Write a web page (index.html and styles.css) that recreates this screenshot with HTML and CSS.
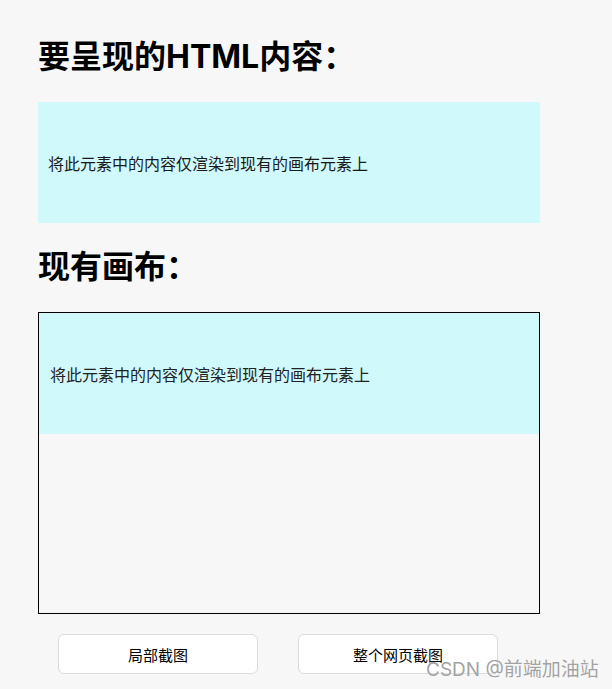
FILE: index.html
```html
<!DOCTYPE html>
<html lang="zh">
<head>
<meta charset="utf-8">
<link rel="stylesheet" href="styles.css">
</head>
<body>
<main class="page">
  <h1 class="title">要呈现的HTML内容：</h1>
  <div class="source">将此元素中的内容仅渲染到现有的画布元素上</div>
  <h2 class="title second">现有画布：</h2>
  <div class="canvas">
    <div class="canvas-shot">将此元素中的内容仅渲染到现有的画布元素上</div>
  </div>
  <div class="actions">
    <button class="btn">局部截图</button>
    <button class="btn">整个网页截图</button>
  </div>
</main>
<div class="watermark">CSDN @前端加油站</div>
</body>
</html>
```
FILE: styles.css
```css
html, body {
  margin: 0;
  padding: 0;
  background: #f7f7f7;
}
body {
  font-family: "Noto Sans CJK SC", "Noto Sans", sans-serif;
  color: #000;
  width: 612px;
  height: 689px;
  overflow: hidden;
  position: relative;
}
.page {
  padding: 35px 0 0 38px;
}
.title {
  margin: 0 0 23px;
  font-family: Inter, "Noto Sans CJK SC", sans-serif;
  font-size: 32px;
  line-height: 44px;
  font-weight: 700;
}
.title.second {
  margin-top: 22px;
}
.source {
  width: 492px;
  height: 121px;
  padding-left: 10px;
  background: #d0f9fb;
  display: flex;
  align-items: center;
  font-size: 16px;
  color: #1a1a1a;
}
.canvas {
  width: 500px;
  height: 300px;
  border: 1px solid #000;
}
.canvas-shot {
  height: 121px;
  padding-left: 11px;
  background: #d0f9fb;
  display: flex;
  align-items: center;
  font-size: 16px;
  color: #222;
}
.actions {
  display: flex;
  gap: 40px;
  margin: 20px 0 0 20px;
}
.btn {
  width: 200px;
  height: 40px;
  background: #fff;
  border: 1px solid #dcdcdc;
  border-radius: 6px;
  font-family: "Noto Sans CJK SC", sans-serif;
  font-size: 15px;
  color: #000;
  padding: 0;
}
.watermark {
  position: absolute;
  left: 426px;
  top: 656px;
  font-family: Inter, "Noto Sans CJK SC", sans-serif;
  font-size: 19px;
  line-height: 28px;
  color: #a3a3a3;
  text-shadow: 0 0 1px #fff;
}
```
